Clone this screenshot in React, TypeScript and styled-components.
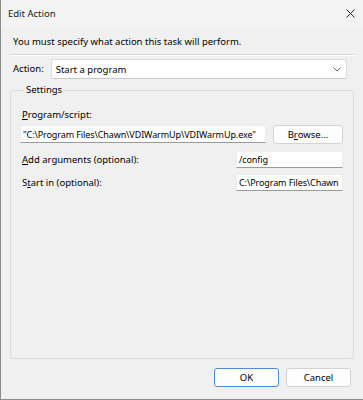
import React from "react";
import styled, { createGlobalStyle } from "styled-components";

const Global = createGlobalStyle`
  html, body { margin: 0; padding: 0; background: #f0f0f0; }
  * { box-sizing: border-box; }
`;

const Window = styled.div`
  width: 363px;
  height: 400px;
  display: flex;
  flex-direction: column;
  background: #f0f0f0;
  border-left: 1px solid #8c8c8c;
  border-bottom: 1px solid #8c8c8c;
  font-family: "Noto Sans", "Segoe UI", sans-serif;
  font-size: 9.5px;
  color: #000;
  overflow: hidden;
`;

const TitleBar = styled.div`
  height: 28px;
  display: flex;
  align-items: center;
  justify-content: space-between;
  padding: 0 8px 2px 7px;
  background: #f3f3f3;
`;

const Title = styled.span`
  font-size: 9.5px;
  color: #1a1a1a;
`;

const CloseIcon = styled.svg`
  width: 9px;
  height: 9px;
  margin-top: 1px;
`;

const Content = styled.div`
  flex: 1;
  display: flex;
  flex-direction: column;
  padding: 0 9px 0 9px;
`;

const Instruction = styled.div`
  margin-top: 6px;
  line-height: 16px;
  padding-left: 3px;
`;

const Separator = styled.div`
  margin-top: 4px;
  height: 2px;
  border-top: 1px solid #d6d6d6;
  border-bottom: 1px solid #ffffff;
`;

const ActionRow = styled.div`
  margin-top: 3px;
  display: flex;
  align-items: center;
  padding: 0 7px 0 3px;
  gap: 7px;
`;

const Label = styled.span`
  line-height: 16px;
  white-space: nowrap;
`;

const Combo = styled.div`
  flex: 1;
  height: 20px;
  display: flex;
  align-items: center;
  justify-content: space-between;
  padding: 0 5px 0 4px;
  background: #fff;
  border: 1px solid #dcdcdc;
  border-bottom-color: #c8c8c8;
  border-radius: 3px;
`;

const Chevron = styled.svg`
  width: 8px;
  height: 5px;
`;

const Group = styled.fieldset`
  margin: 4px 0 0 0;
  min-width: 0;
  height: 276px;
  padding: 10px 10px 0 9px;
  border: 1px solid #dcdcdc;
  border-radius: 3px;
  display: flex;
  flex-direction: column;
`;

const Legend = styled.legend`
  padding: 0 2px;
  margin-left: 4px;
  line-height: 14px;
  font-size: 9.5px;
`;

const FieldLabel = styled.div`
  padding-left: 2px;
  line-height: 16px;
`;

const ProgramRow = styled.div`
  margin-top: 2px;
  display: flex;
  gap: 7px;
`;

const TextBox = styled.div<{ $width?: number; $height?: number }>`
  ${(p) => (p.$width ? `width: ${p.$width}px; flex: none;` : "flex: 1;")}
  min-width: 0;
  height: ${(p) => p.$height ?? 18}px;
  display: flex;
  align-items: center;
  padding: 0 2px 0 2px;
  background: #fff;
  border: 1px solid #ececec;
  border-bottom: 1px solid #9a9a9a;
  white-space: nowrap;
  overflow: hidden;
  font-size: 9px;
  letter-spacing: -0.1px;
`;

const Button = styled.div<{ $primary?: boolean; $width?: number }>`
  width: ${(p) => p.$width ?? 65}px;
  flex: none;
  height: 19px;
  display: flex;
  align-items: center;
  justify-content: center;
  background: #fdfdfd;
  border: 1px solid ${(p) => (p.$primary ? "#4a8fd6" : "#d3d3d3")};
  border-radius: 3px;
`;

const FieldRow = styled.div<{ $top: number }>`
  margin-top: ${(p) => p.$top}px;
  display: flex;
  align-items: center;
  justify-content: space-between;
`;

const Footer = styled.div`
  margin-top: 9px;
  display: flex;
  justify-content: flex-end;
  gap: 7px;
  padding-right: 3px;
`;

const U = styled.span`
  text-decoration: underline;
`;

export default function App() {
  return (
    <>
      <Global />
      <Window>
        <TitleBar>
          <Title>Edit Action</Title>
          <CloseIcon viewBox="0 0 9 9">
            <path d="M0.5 0.5 L8.5 8.5 M8.5 0.5 L0.5 8.5" stroke="#222" strokeWidth="1" />
          </CloseIcon>
        </TitleBar>
        <Content>
          <Instruction>You must specify what action this task will perform.</Instruction>
          <Separator />
          <ActionRow>
            <Label>Action:</Label>
            <Combo>
              <span>Start a program</span>
              <Chevron viewBox="0 0 8 5">
                <path d="M0.5 0.5 L4 4 L7.5 0.5" stroke="#666" fill="none" strokeWidth="1" />
              </Chevron>
            </Combo>
          </ActionRow>
          <Group>
            <Legend>Settings</Legend>
            <FieldLabel>
              <U>P</U>rogram/script:
            </FieldLabel>
            <ProgramRow>
              <TextBox>"C:\Program Files\Chawn\VDIWarmUp\VDIWarmUp.exe"</TextBox>
              <Button $width={70}>
                B<U>r</U>owse...
              </Button>
            </ProgramRow>
            <FieldRow $top={7}>
              <FieldLabel>
                <U>A</U>dd arguments (optional):
              </FieldLabel>
              <TextBox $width={107} $height={17}>/config</TextBox>
            </FieldRow>
            <FieldRow $top={6}>
              <FieldLabel>
                S<U>t</U>art in (optional):
              </FieldLabel>
              <TextBox $width={107} $height={17}>C:\Program Files\Chawn</TextBox>
            </FieldRow>
          </Group>
          <Footer>
            <Button $primary>OK</Button>
            <Button>Cancel</Button>
          </Footer>
        </Content>
      </Window>
    </>
  );
}
